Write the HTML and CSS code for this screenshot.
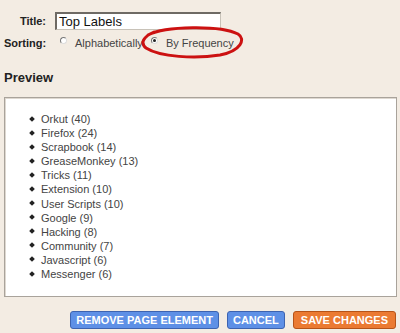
FILE: index.html
```html
<!DOCTYPE html>
<html lang="en">

<head>
    <meta charset="UTF-8">
    <title>Configure Labels</title>
    <link rel="stylesheet" href="styles.css">
</head>

<body>
    <div class="panel">
        <div class="form">
            <div class="row">
                <span class="label">Title:</span>
                <div class="text-input">Top Labels</div>
            </div>
            <div class="row sorting">
                <span class="label">Sorting:</span>
                <span class="radio"></span>
                <span class="option">Alphabetically</span>
                <span class="radio checked"></span>
                <span class="option">By Frequency</span>
                <svg class="circle-mark" width="106" height="34" viewBox="0 0 106 34">
                    <path d="M8 10 C 25 1, 80 0, 98 9 C 106 14, 101 26, 80 30 C 55 34, 20 32, 6 23 C 0 18, 3 12, 14 7" fill="none" stroke="#cc1111" stroke-width="3" stroke-linecap="round"/>
                </svg>
            </div>
        </div>

        <h2 class="preview-title">Preview</h2>
        <div class="preview-box">
            <ul class="label-list">
                <li>Orkut (40)</li>
                <li>Firefox (24)</li>
                <li>Scrapbook (14)</li>
                <li>GreaseMonkey (13)</li>
                <li>Tricks (11)</li>
                <li>Extension (10)</li>
                <li>User Scripts (10)</li>
                <li>Google (9)</li>
                <li>Hacking (8)</li>
                <li>Community (7)</li>
                <li>Javascript (6)</li>
                <li>Messenger (6)</li>
            </ul>
        </div>

        <div class="buttons">
            <button class="btn blue">REMOVE PAGE ELEMENT</button>
            <button class="btn blue">CANCEL</button>
            <button class="btn orange">SAVE CHANGES</button>
        </div>
    </div>
</body>

</html>
```

FILE: styles.css
```css
* {
    margin: 0;
    padding: 0;
    box-sizing: border-box;
}

body {
    background-color: #f3ece3;
    font-family: "Liberation Sans", Arial, sans-serif;
    color: #333;
    width: 400px;
    height: 333px;
    overflow: hidden;
}

.panel {
    padding: 12px 3px 0 4px;
}

.form {
    display: flex;
    flex-direction: column;
    gap: 5px;
}

.row {
    display: flex;
    align-items: center;
}

.label {
    width: 42px;
    text-align: right;
    font-weight: bold;
    font-size: 11px;
    color: #222;
}

.text-input {
    margin-left: 9px;
    width: 166px;
    height: 18px;
    background: white;
    border: 1px solid #c8c2b8;
    border-top: 2px solid #6e6a64;
    border-left: 2px solid #6e6a64;
    font-size: 13px;
    line-height: 15px;
    padding-left: 2px;
    color: #111;
}

.sorting {
    position: relative;
    height: 16px;
}

.radio {
    width: 7px;
    height: 7px;
    border-radius: 50%;
    border: 1px solid #777;
    border-right-color: #ddd;
    border-bottom-color: #ddd;
    background: white;
    margin-left: 14px;
    margin-top: -6px;
    position: relative;
}

.radio.checked {
    margin-left: 8px;
}

.radio.checked::after {
    content: "";
    position: absolute;
    left: 1px;
    top: 1px;
    width: 3px;
    height: 3px;
    border-radius: 50%;
    background: #222;
}

.option {
    font-size: 11px;
    color: #444;
    margin-left: 8px;
}

.circle-mark {
    position: absolute;
    left: 136px;
    top: -10px;
}

.preview-title {
    font-size: 13px;
    font-weight: bold;
    color: #222;
    margin-top: 19px;
    line-height: 16px;
}

.preview-box {
    margin-top: 11px;
    height: 200px;
    background: white;
    border: 1px solid #a9a39b;
    box-shadow: inset 1px 1px 0 #ded8d0;
    padding: 14px 0 0 25px;
}

.label-list {
    list-style: none;
}

.label-list li {
    font-size: 11px;
    line-height: 14.1px;
    color: #444;
    display: flex;
    align-items: center;
}

.label-list li::before {
    content: "";
    width: 4px;
    height: 4px;
    background: #222;
    transform: rotate(45deg);
    margin-right: 7px;
    margin-top: -1px;
}

.buttons {
    display: flex;
    justify-content: flex-end;
    gap: 8px;
    margin-top: 14px;
    padding-right: 1px;
}

.btn {
    font-family: "Liberation Sans", Arial, sans-serif;
    font-size: 11px;
    font-weight: bold;
    color: white;
    height: 18px;
    padding: 0 5px;
    border-radius: 3px;
    border: 1px solid #3d63b0;
    background: #5e90e6;
}

.btn.orange {
    padding: 0 7px;
    border-color: #b65318;
    background: #eb7a32;
}
```
